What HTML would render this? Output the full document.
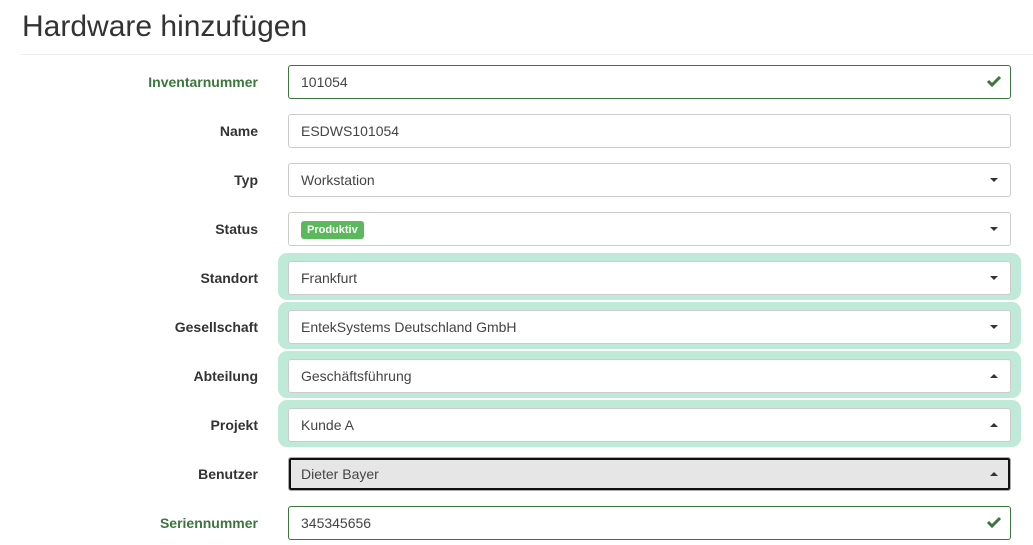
<!DOCTYPE html>
<html><head><meta charset="utf-8"><style>
body{margin:0;width:1033px;height:545px;overflow:hidden;background:#fff;font-family:"Liberation Sans",sans-serif;color:#333;position:relative}
h1{position:absolute;left:22px;top:10px;margin:0;font-weight:normal;font-size:30px;color:#333}
.hr{position:absolute;left:20px;right:0;top:54px;border-top:1px solid #eee}
.lbl{position:absolute;right:775px;font-weight:bold;font-size:14px;text-align:right;line-height:20px}
.ok{color:#3c763d}
.in{position:absolute;left:288px;height:32px;border:1px solid #ccc;border-radius:3px;background:#fff;font-size:14px;line-height:32px;padding-left:12px;box-sizing:content-box;width:709px;color:#444}
.in.g{border-color:#3c763d}
.hl{position:absolute;left:278px;width:743px;height:47px;background:#bfe9d8;border-radius:9px}
.car{position:absolute;right:12px;top:14px;width:0;height:0;border-left:4px solid transparent;border-right:4px solid transparent;border-top:4px solid #333}
.car.up{border-top:0;border-bottom:4px solid #333}
.chk{position:absolute;right:8px;top:7px}
.badge{display:inline-block;background:#5cb85c;color:#fff;font-weight:bold;font-size:11px;line-height:18px;padding:0 6px;border-radius:3px;vertical-align:middle;position:relative;top:0px}
</style></head><body>
<h1>Hardware hinzufügen</h1>
<div class="hr"></div>

<div class="hl" style="top:253px"></div>
<div class="hl" style="top:302px"></div>
<div class="hl" style="top:351px"></div>
<div class="hl" style="top:400px"></div>

<div class="lbl ok" style="top:72px">Inventarnummer</div>
<div class="in g" style="top:65px">101054<svg class="chk" width="16" height="16" viewBox="0 0 16 16"><path d="M2 8l4 4 8-8" stroke="#3c763d" stroke-width="3" fill="none"/></svg></div>

<div class="lbl" style="top:121px">Name</div>
<div class="in" style="top:114px">ESDWS101054</div>

<div class="lbl" style="top:170px">Typ</div>
<div class="in" style="top:163px">Workstation<span class="car"></span></div>

<div class="lbl" style="top:219px">Status</div>
<div class="in" style="top:212px"><span class="badge">Produktiv</span><span class="car"></span></div>

<div class="lbl" style="top:268px">Standort</div>
<div class="in" style="top:261px">Frankfurt<span class="car"></span></div>

<div class="lbl" style="top:317px">Gesellschaft</div>
<div class="in" style="top:310px">EntekSystems Deutschland GmbH<span class="car"></span></div>

<div class="lbl" style="top:366px">Abteilung</div>
<div class="in" style="top:359px">Geschäftsführung<span class="car up"></span></div>

<div class="lbl" style="top:415px">Projekt</div>
<div class="in" style="top:408px">Kunde A<span class="car up"></span></div>

<div class="lbl" style="top:464px">Benutzer</div>
<div class="in" style="top:457px;background:#e6e6e6;border:1px solid #aaa;box-shadow:inset 0 0 0 2px #111">Dieter Bayer<span class="car up"></span></div>

<div class="lbl ok" style="top:513px">Seriennummer</div>
<div class="in g" style="top:506px">345345656<svg class="chk" width="16" height="16" viewBox="0 0 16 16"><path d="M2 8l4 4 8-8" stroke="#3c763d" stroke-width="3" fill="none"/></svg></div>
</body></html>
